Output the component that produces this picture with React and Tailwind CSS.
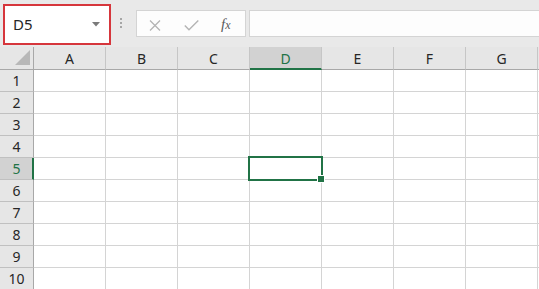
import React from "react";

const COLS = ["A", "B", "C", "D", "E", "F", "G"];
const ROWS = [1, 2, 3, 4, 5, 6, 7, 8, 9, 10];

export default function App() {
  return (
    <div
      className="w-[539px] h-[289px] overflow-hidden bg-white text-[#262626]"
      style={{ fontFamily: '"Noto Sans", "Open Sans", sans-serif' }}
    >
      {/* toolbar */}
      <div className="h-[47px] bg-[#e9e9e9] flex items-start">
        <div className="ml-[3px] mt-[4px] w-[108px] h-[41px] border-2 border-[#d6363c] bg-white flex items-center justify-between pl-[8px] pr-[9px]">
          <span className="text-[15px] leading-none text-[#262626]">D5</span>
          <svg width="8" height="5" viewBox="0 0 8 5" className="mt-[-1px]">
            <path d="M0 0 L8 0 L4 4.5 Z" fill="#7a7a7a" />
          </svg>
        </div>
        <div className="ml-[9px] mt-[18px] flex flex-col gap-[2px]">
          <div className="w-[2px] h-[2px] bg-[#a6a6a6]" />
          <div className="w-[2px] h-[2px] bg-[#a6a6a6]" />
          <div className="w-[2px] h-[2px] bg-[#a6a6a6]" />
        </div>
        <div className="ml-[14px] mt-[10px] w-[110px] h-[27px] border border-[#d4d4d4] bg-[#fdfdfd] flex items-start pt-[8px]">
          <svg width="12" height="11" viewBox="0 0 12 11" className="ml-[12px] mt-[1px]">
            <path d="M1 0.5 L11 10.5 M11 0.5 L1 10.5" stroke="#b4b4b4" strokeWidth="1.3" fill="none" />
          </svg>
          <svg width="15" height="11" viewBox="0 0 15 11" className="ml-[23px] mt-[1px]">
            <path d="M0.8 5.5 L5 9.8 L14.3 0.6" stroke="#b4b4b4" strokeWidth="1.4" fill="none" />
          </svg>
          <span
            className="ml-[22px] mt-[-2px] text-[15px] leading-none italic text-[#5a5a5a]"
            style={{ fontFamily: '"Liberation Serif", serif' }}
          >
            f<span className="text-[12px]">x</span>
          </span>
        </div>
        <div className="ml-[3px] mt-[10px] flex-1 h-[27px] border border-r-0 border-[#d4d4d4] bg-[#fdfdfd]" />
      </div>

      {/* sheet */}
      <div className="grid grid-cols-[34px_repeat(7,72px)_1fr] grid-rows-[23px_repeat(10,22px)]">
        {/* corner */}
        <div className="bg-[#e6e6e6] border-r border-b border-[#a8a8a8] relative">
          <svg width="15" height="15" viewBox="0 0 15 15" className="absolute left-[15px] top-[3px]">
            <path d="M15 0 L15 15 L0 15 Z" fill="#b8b8b8" />
          </svg>
        </div>
        {COLS.map((c) =>
          c === "D" ? (
            <div
              key={c}
              className="bg-[#d2d2d2] border-r border-r-[#c6c6c6] border-b-2 border-b-[#217346] flex items-center justify-center text-[14px] text-[#217346] pt-[1px]"
            >
              {c}
            </div>
          ) : (
            <div
              key={c}
              className="bg-[#e6e6e6] border-r border-r-[#c6c6c6] border-b border-b-[#a8a8a8] flex items-center justify-center text-[14px] text-[#262626]"
            >
              {c}
            </div>
          )
        )}
        <div className="bg-[#e6e6e6] border-b border-[#a8a8a8]" />

        {ROWS.map((r) => (
          <React.Fragment key={r}>
            {r === 5 ? (
              <div className="bg-[#d2d2d2] border-r-2 border-r-[#217346] border-b border-b-[#c0c0c0] flex items-center justify-center text-[14px] text-[#217346] pl-[1px]">
                {r}
              </div>
            ) : (
              <div className="bg-[#e6e6e6] border-r border-r-[#a8a8a8] border-b border-b-[#c0c0c0] flex items-center justify-center text-[14px] text-[#262626]">
                {r}
              </div>
            )}
            {COLS.map((c) => (
              <div key={c} className="border-r border-b border-[#d4d4d4] relative">
                {r === 5 && c === "D" && (
                  <div className="absolute left-[-2px] top-[-2px] w-[75px] h-[25px] border-2 border-[#217346] z-10">
                    <div className="absolute right-[-4px] bottom-[-4px] w-[6px] h-[6px] bg-[#217346] border border-white box-content" />
                  </div>
                )}
              </div>
            ))}
            <div className="border-b border-[#d4d4d4]" />
          </React.Fragment>
        ))}
      </div>
    </div>
  );
}
